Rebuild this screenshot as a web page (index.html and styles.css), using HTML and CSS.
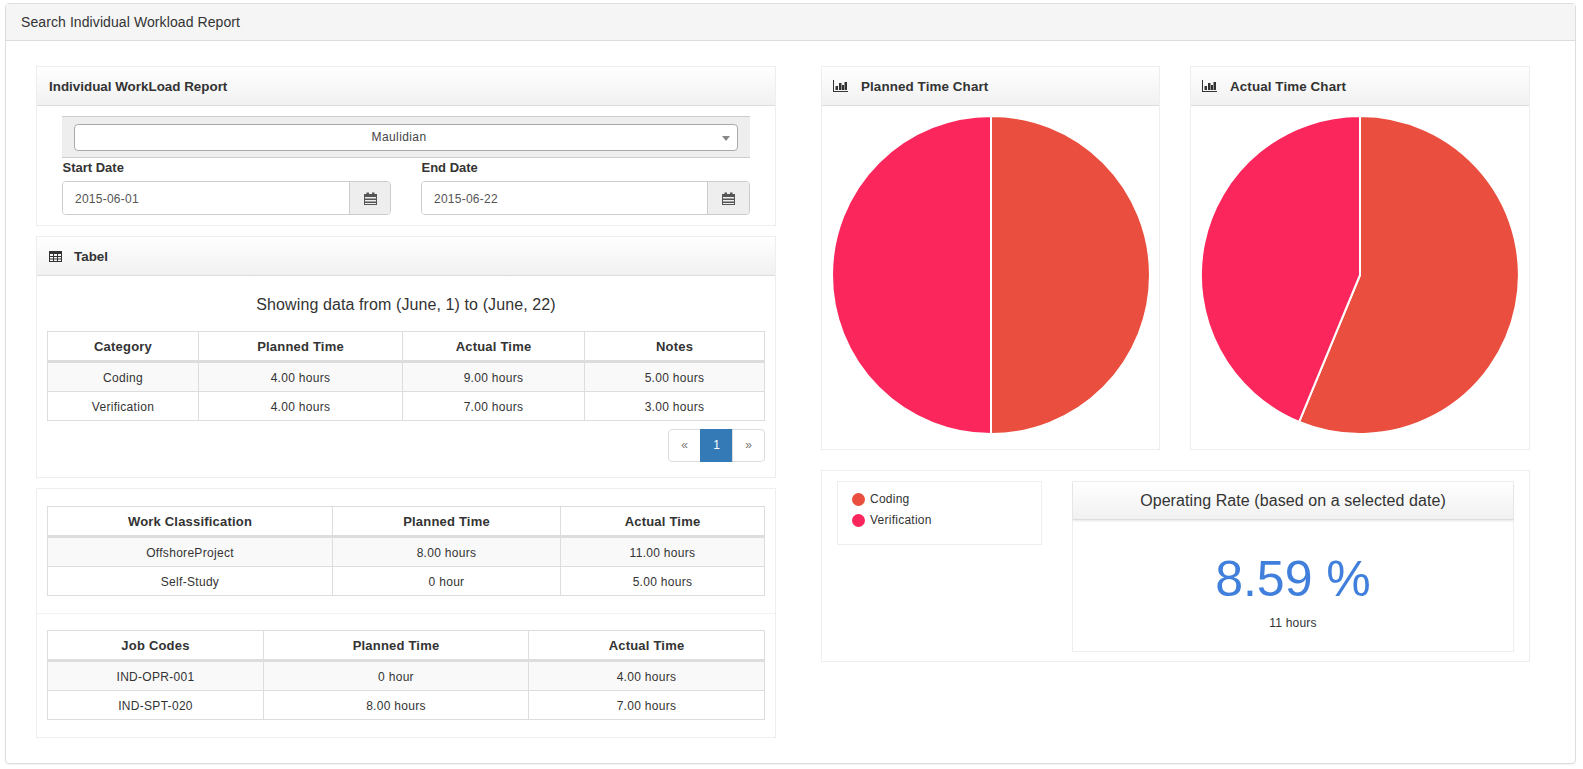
FILE: index.html
```html
<!doctype html>
<html>
<head>
	<meta charset="utf-8">
	<title>Search Individual Workload Report</title>
	<link rel="stylesheet" href="styles.css">
</head>
<body>

<svg class="defs" width="0" height="0">
	<symbol id="ico-calendar" viewBox="0 0 13 13">
		<path d="M0 2h2.500v-1.500h2.500v1.500h3v-1.500h2.500v1.500h2.500v11h-13z M1 5v1.500h11v-1.500z M1 8v1.500h11v-1.500z M1 11v1h11v-1z" fill-rule="evenodd"/>
	</symbol>
	<symbol id="ico-bars" viewBox="0 0 15 12">
		<path d="M0 0h1v11h14v1h-15z M2.500 6h2.500v4h-2.500z M6 3h2.500v7h-2.500z M9 5h2v5h-2z M11.500 2h2.500v8h-2.500z"/>
	</symbol>
	<symbol id="ico-table" viewBox="0 0 13 11">
		<path d="M0 0h13v11h-13z M1 3v2h3v-2z M5 3v2h3v-2z M9 3v2h3v-2z M1 6v1.500h3v-1.500z M5 6v1.500h3v-1.500z M9 6v1.500h3v-1.500z M1 8.500v1.500h3v-1.500z M5 8.500v1.500h3v-1.500z M9 8.500v1.500h3v-1.500z" fill-rule="evenodd"/>
	</symbol>
</svg>

<div class="page-panel">
	<div class="page-heading">Search Individual Workload Report</div>
	<div class="page-body">

		<div class="col-left">

			<div class="widget">
				<div class="widget-header"><h3>Individual WorkLoad Report</h3></div>
				<div class="filter">
					<div class="select-well">
						<div class="fake-select"><span>Maulidian</span><i class="caret"></i></div>
					</div>
					<div class="dates">
						<div class="date-field">
							<label>Start Date</label>
							<div class="input-group">
								<input type="text" value="2015-06-01">
								<span class="addon"><svg class="ico-cal"><use href="#ico-calendar"/></svg></span>
							</div>
						</div>
						<div class="date-field">
							<label>End Date</label>
							<div class="input-group">
								<input type="text" value="2015-06-22">
								<span class="addon"><svg class="ico-cal"><use href="#ico-calendar"/></svg></span>
							</div>
						</div>
					</div>
				</div>
			</div>

			<div class="widget">
				<div class="widget-header"><svg class="ico-table"><use href="#ico-table"/></svg><h3>Tabel</h3></div>
				<div class="table-body">
					<p class="range">Showing data from (June, 1) to (June, 22)</p>
					<table class="grid grid-category">
						<thead>
							<tr><th>Category</th><th>Planned Time</th><th>Actual Time</th><th>Notes</th></tr>
						</thead>
						<tbody>
							<tr><td>Coding</td><td>4.00 hours</td><td>9.00 hours</td><td>5.00 hours</td></tr>
							<tr><td>Verification</td><td>4.00 hours</td><td>7.00 hours</td><td>3.00 hours</td></tr>
						</tbody>
					</table>
					<ul class="pagination">
						<li>&laquo;</li>
						<li class="active">1</li>
						<li>&raquo;</li>
					</ul>
				</div>
			</div>

			<div class="widget">
				<div class="table-section">
					<table class="grid grid-work">
						<thead>
							<tr><th>Work Classification</th><th>Planned Time</th><th>Actual Time</th></tr>
						</thead>
						<tbody>
							<tr><td>OffshoreProject</td><td>8.00 hours</td><td>11.00 hours</td></tr>
							<tr><td>Self-Study</td><td>0 hour</td><td>5.00 hours</td></tr>
						</tbody>
					</table>
				</div>
				<div class="table-section">
					<table class="grid grid-codes">
						<thead>
							<tr><th>Job Codes</th><th>Planned Time</th><th>Actual Time</th></tr>
						</thead>
						<tbody>
							<tr><td>IND-OPR-001</td><td>0 hour</td><td>4.00 hours</td></tr>
							<tr><td>IND-SPT-020</td><td>8.00 hours</td><td>7.00 hours</td></tr>
						</tbody>
					</table>
				</div>
			</div>

		</div>

		<div class="col-right">
			<div class="charts">
				<div class="widget">
					<div class="widget-header"><svg class="ico-bars"><use href="#ico-bars"/></svg><h3>Planned Time Chart</h3></div>
					<div class="chart-body">
						<svg class="pie" viewBox="-1 -1 318 318">
							<path class="slice-coding" d="M158 158V0A158 158 0 0 1 158 316z"/>
							<path class="slice-verification" d="M158 158V316A158 158 0 0 1 158 0z"/>
						</svg>
					</div>
				</div>
				<div class="widget">
					<div class="widget-header"><svg class="ico-bars"><use href="#ico-bars"/></svg><h3>Actual Time Chart</h3></div>
					<div class="chart-body">
						<!-- coding 9 of 16 hours = 202.5deg -->
						<svg class="pie" viewBox="-1 -1 318 318">
							<path class="slice-coding" d="M158 158V0A158 158 0 1 1 97.5 304z"/>
							<path class="slice-verification" d="M158 158L97.500 304A158 158 0 0 1 158 0z"/>
						</svg>
					</div>
				</div>
			</div>

			<div class="widget summary">
				<ul class="legend">
					<li><i class="dot dot-coding"></i>Coding</li>
					<li><i class="dot dot-verification"></i>Verification</li>
				</ul>
				<div class="rate">
					<div class="rate-header">Operating Rate (based on a selected date)</div>
					<div class="rate-body">
						<div class="rate-value">8.59 %</div>
						<div class="rate-hours">11 hours</div>
					</div>
				</div>
			</div>
		</div>

	</div>
</div>

</body>
</html>
```

FILE: styles.css
```css
* {box-sizing:border-box;}
body {margin:0; background:#fff; color:#333; font:12px/17px "Liberation Sans",Arial,sans-serif;}
.defs {position:absolute;}
svg {fill:currentColor;}

.page-panel {margin:3px 7px 5px 5px; height:761px; border:1px solid #ddd; border-radius:4px; box-shadow:0 1px 1px rgba(0,0,0,.05);}
.page-heading {height:37px; padding:10px 15px; background:#f5f5f5; border-bottom:1px solid #ddd; font-size:14px; line-height:17px; letter-spacing:.09px; color:#333;}
.page-body {display:grid; grid-template-columns:740px 709px; column-gap:45px; padding:25px 30px 0;}

.col-left {display:flex; flex-direction:column; gap:10px;}
.col-right {display:flex; flex-direction:column; gap:20px;}
.charts {display:grid; grid-template-columns:339px 340px; column-gap:30px;}
.charts h3 {letter-spacing:.1px;}

.widget {background:#fff; border:1px solid #eee;}
.widget-header {display:flex; align-items:center; height:39px; padding:0 12px; background:linear-gradient(#fff,#f1f1f1); border-bottom:1px solid #ddd; color:#333;}
.widget-header h3 {margin:0; font-size:13.400px; font-weight:bold; line-height:17px;}
.ico-table {width:13px; height:11px; margin-right:12px;}
.ico-bars {width:15px; height:12px; margin:0 13px 0 -1px;}

/* filter */
.filter {height:119px; padding:10px 25px 0;}
.select-well {height:42px; padding:7px 12px; background:#eee; border-top:1px solid #ccc; border-bottom:1px solid #ccc;}
.fake-select {display:flex; align-items:center; justify-content:center; position:relative; height:27px; padding-right:14px; background:#fff; border:1px solid #aaa; border-radius:4px; color:#444; letter-spacing:.4px;}
.caret {position:absolute; right:7px; top:11px; border:4px solid transparent; border-top:5px solid #888; border-bottom:0;}
.dates {display:grid; grid-template-columns:329px 329px; column-gap:30px;}
.date-field label {display:block; height:23px; padding:1px 0 0 .5px; font-size:13px; font-weight:bold; line-height:18px;}
.input-group {display:flex; height:34px; border:1px solid #ccc; border-radius:4px; overflow:hidden;}
.input-group input {flex:1; min-width:0; padding:2px 12px 0; border:0; outline:0; font:12px "Liberation Sans",Arial,sans-serif; letter-spacing:.25px; color:#555;}
.addon {display:flex; align-items:center; justify-content:center; width:41px; padding-top:1px; background:#eee; border-left:1px solid #ccc; color:#555;}
.date-field + .date-field .addon {width:42px;}
.ico-cal {width:13px; height:13px;}

/* tables */
.table-body {height:201px; padding:0 10px;}
.range {margin:0; padding-top:19px; height:55px; font-size:16px; line-height:19px; letter-spacing:.1px; text-align:center;}
.grid {width:718px; border-collapse:collapse; table-layout:fixed; text-align:center;}
.grid th, .grid td {height:29px; padding:2px 8px 0; border:1px solid #ddd; font-size:12px; letter-spacing:.3px; vertical-align:middle;}
.grid th {height:30px; padding-top:0; border-bottom-width:3px; font-size:13px; letter-spacing:.2px;}
.grid tbody tr:first-child td {background:#f9f9f9; height:30px;}
.grid-category th:nth-child(1) {width:151px;}
.grid-category th:nth-child(2) {width:204px;}
.grid-category th:nth-child(3) {width:182px;}
.grid-work th:nth-child(1) {width:285px;}
.grid-work th:nth-child(2) {width:228px;}
.grid-codes th:nth-child(1) {width:216px;}
.grid-codes th:nth-child(2) {width:265px;}

.pagination {display:flex; justify-content:flex-end; margin:8px 0 0; padding:0; list-style:none;}
.pagination li {width:33px; height:33px; margin-left:-1px; border:1px solid #ddd; color:#777; text-align:center; line-height:31px;}
.pagination li:first-child {border-radius:4px 0 0 4px;}
.pagination li:last-child {border-radius:0 4px 4px 0;}
.pagination .active {background:#337ab7; border-color:#337ab7; color:#fff;}

.table-section {padding:17px 10px 17px;}
.table-section + .table-section {padding:16px 10px 17px; border-top:1px solid #f2f2f2;}

/* charts */
.chart-body {height:343px; padding:9px 0 0 9px;}
.pie {display:block; width:320px; height:320px;}
.pie path {stroke:#fff; stroke-width:2;}
.slice-coding {fill:#e94e3e;}
.slice-verification {fill:#fb265b;}

.summary {display:flex; align-items:flex-start; height:192px; padding:10px 15px;}
.legend {width:205px; height:64px; margin:0 30px 0 0; padding:7px 14px 7px; list-style:none; border:1px solid #eee; letter-spacing:.25px;}
.legend li {display:flex; align-items:center; height:21px;}
.dot {width:13px; height:13px; margin-right:5px; border-radius:50%;}
.dot-coding {background:#e94e3e;}
.dot-verification {background:#fb265b;}

.rate {width:442px; height:171px; border:1px solid #eee;}
.rate-header {height:38px; background:linear-gradient(#fff,#f1f1f1); border-bottom:1px solid #ddd; box-shadow:0 1px 2px rgba(0,0,0,.1); font-size:16px; line-height:37px; letter-spacing:.08px; text-align:center;}
.rate-body {text-align:center;}
.rate-value {padding-top:30px; font-size:50px; line-height:58px; color:#4080dc;}
.rate-hours {margin-top:7px; letter-spacing:.2px;}
```
